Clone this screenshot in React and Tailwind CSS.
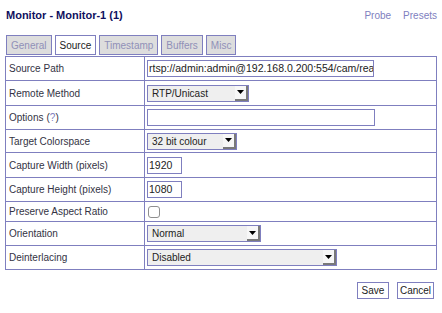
const border = "border-[#7f7fbf]";

const tabs = ["General", "Source", "Timestamp", "Buffers", "Misc"];

const Select = ({ value, width }) => (
  <div
    className={`flex h-[17px] items-stretch border ${border} bg-[#efefef]`}
    style={{ width }}
  >
    <span className="flex-1 pl-[4px] leading-[15px] text-[#222]">{value}</span>
    <span className="flex w-[13px] items-center justify-center border-r-2 border-b-2 border-[#7a7a7a] bg-[#f7f7f7]">
      <svg width="7" height="4" viewBox="0 0 7 4">
        <path d="M0 0h7L3.5 4z" fill="#000" />
      </svg>
    </span>
  </div>
);

const TextInput = ({ value, width }) => (
  <div
    className={`h-[17px] overflow-hidden whitespace-nowrap border ${border} bg-white pl-[1px] text-[10.5px] leading-[15px] text-[#222]`}
    style={{ width }}
  >
    {value}
  </div>
);

const rows = [
  { label: "Source Path", h: "h-[23px]", field: <TextInput value="rtsp://admin:admin@192.168.0.200:554/cam/rea" width={227} /> },
  { label: "Remote Method", h: "h-[25px]", field: <Select value="RTP/Unicast" width={102} /> },
  { label: "Options", help: true, h: "h-[24px]", field: <TextInput value="" width={228} /> },
  { label: "Target Colorspace", h: "h-[23px]", field: <Select value="32 bit colour" width={90} /> },
  { label: "Capture Width (pixels)", h: "h-[25px]", field: <TextInput value="1920" width={35} /> },
  { label: "Capture Height (pixels)", h: "h-[24px]", field: <TextInput value="1080" width={35} /> },
  {
    label: "Preserve Aspect Ratio",
    h: "h-[20px]",
    field: <div className="ml-[1px] h-[12px] w-[12px] rounded-[3px] border border-[#8f8f8f] bg-white" />,
  },
  { label: "Orientation", h: "h-[24px]", field: <Select value="Normal" width={114} /> },
  { label: "Deinterlacing", h: "h-[24px]", field: <Select value="Disabled" width={190} /> },
];

export default function App() {
  return (
    <div
      className="w-[442px] h-[313px] bg-white px-[5px] text-[10px] text-[#333344]"
      style={{ fontFamily: '"Liberation Sans", Arial, sans-serif' }}
    >
      {/* header */}
      <div className="flex h-[35px] items-center justify-between pb-[4px] pl-[1px]">
        <h1 className="text-[11px] font-bold text-[#101060]">Monitor - Monitor-1 (1)</h1>
        <div className="flex gap-[12px] text-[#8080c0]">
          <span>Probe</span>
          <span>Presets</span>
        </div>
      </div>

      {/* tabs */}
      <div className="flex h-[20px] gap-[3px] pl-[1px]">
        {tabs.map((t) => (
          <div
            key={t}
            className={`flex h-[20px] items-center border ${border} px-[4px] ${
              t === "Source" ? "bg-white text-[#222]" : "bg-[#dddddd] text-[#9090b8]"
            }`}
          >
            {t}
          </div>
        ))}
      </div>

      {/* form */}
      <div className={`mt-[1px] border ${border}`}>
        {rows.map((r, i) => (
          <div
            key={r.label}
            className={`grid grid-cols-[139px_1fr] ${r.h} ${i > 0 ? `border-t ${border}` : ""}`}
          >
            <div className={`flex items-center border-r ${border} pl-[3px]`}>
              {r.label}
              {r.help && (
                <span className="ml-[3px]">
                  (<span className="text-[#8080c0]">?</span>)
                </span>
              )}
            </div>
            <div className="flex items-center pl-[2px]">{r.field}</div>
          </div>
        ))}
      </div>

      {/* buttons */}
      <div className="mt-[12px] flex justify-end gap-[8px] pr-[3px]">
        <button className={`h-[17px] w-[32px] border ${border} bg-white text-[#222]`}>Save</button>
        <button className={`h-[17px] w-[37px] border ${border} bg-white text-[#222]`}>Cancel</button>
      </div>
    </div>
  );
}
